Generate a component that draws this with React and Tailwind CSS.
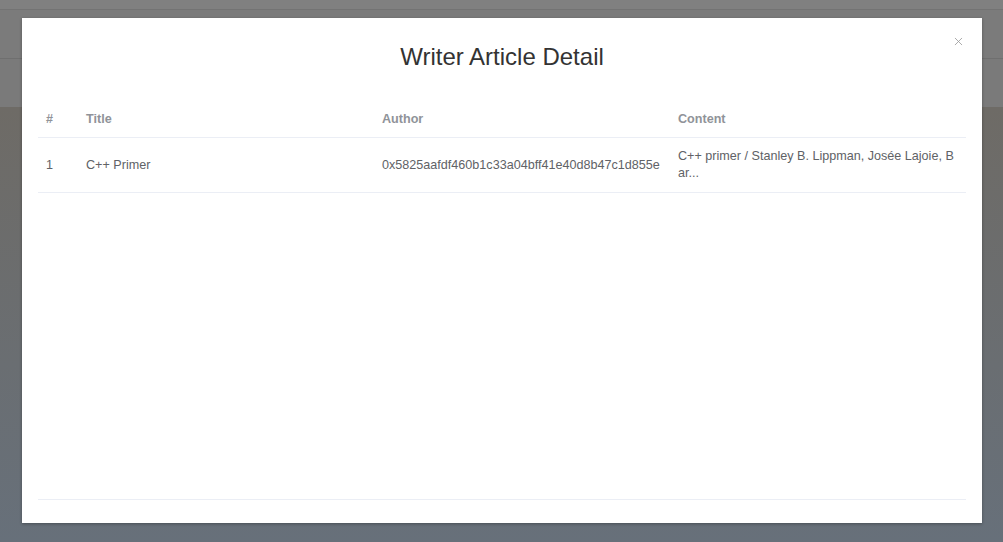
import React from 'react';
import { X } from 'lucide-react';

const rows = [
  {
    id: 1,
    title: 'C++ Primer',
    author: '0x5825aafdf460b1c33a04bff41e40d8b47c1d855e',
    content: 'C++ primer / Stanley B. Lippman, Josée Lajoie, Bar...',
  },
];

const App = () => {
  return (
    <div className="relative h-[542px] w-full overflow-hidden font-['Liberation_Sans',Arial,sans-serif]">
      {/* dimmed page behind the dialog */}
      <div className="flex h-full flex-col">
        <div className="h-[10px] bg-[#808080] border-b border-[#737373]" />
        <div className="h-[49px] bg-[#7b7b7b] border-b border-[#6f6f6f]" />
        <div className="h-[48px] bg-[#7a7a7a]" />
        <div className="flex-1 bg-gradient-to-b from-[#6e6b66] to-[#67707a]" />
      </div>

      <div className="absolute inset-0 pl-[22px] pt-[18px]">
        <div className="relative flex h-[505px] w-[960px] flex-col bg-white px-[16px] pb-[23px] shadow-[0_1px_3px_rgba(0,0,0,0.3)]">
          <button className="absolute right-[17px] top-[17px] text-[#999]">
            <X size={13} strokeWidth={1.5} />
          </button>
          <h2 className="pt-[24px] text-center text-[24px] leading-[30px] text-[#333]">Writer Article Detail</h2>

          <div className="mt-[28px] flex flex-1 flex-col border-b border-[#ebeef5]">
            <table className="w-full table-fixed border-collapse text-[12.6px] leading-[17px]">
              <colgroup>
                <col className="w-[40px]" />
                <col />
                <col />
                <col />
              </colgroup>
              <thead>
                <tr className="border-b border-[#ebeef5] text-left text-[#909399]">
                  <th className="px-[8px] pt-[11px] pb-[9px] font-semibold">#</th>
                  <th className="px-[8px] pt-[11px] pb-[9px] font-semibold">Title</th>
                  <th className="px-[8px] pt-[11px] pb-[9px] font-semibold">Author</th>
                  <th className="px-[8px] pt-[11px] pb-[9px] font-semibold">Content</th>
                </tr>
              </thead>
              <tbody>
                {rows.map(r => (
                  <tr key={r.id} className="border-b border-[#ebeef5] text-[#606266]">
                    <td className="px-[8px] py-[10px] align-middle">{r.id}</td>
                    <td className="px-[8px] py-[10px] align-middle">{r.title}</td>
                    <td className="px-[8px] py-[10px] align-middle whitespace-nowrap">{r.author}</td>
                    <td className="px-[8px] py-[10px] align-middle break-all">{r.content}</td>
                  </tr>
                ))}
              </tbody>
            </table>
          </div>
        </div>
      </div>
    </div>
  );
};

export default App;
